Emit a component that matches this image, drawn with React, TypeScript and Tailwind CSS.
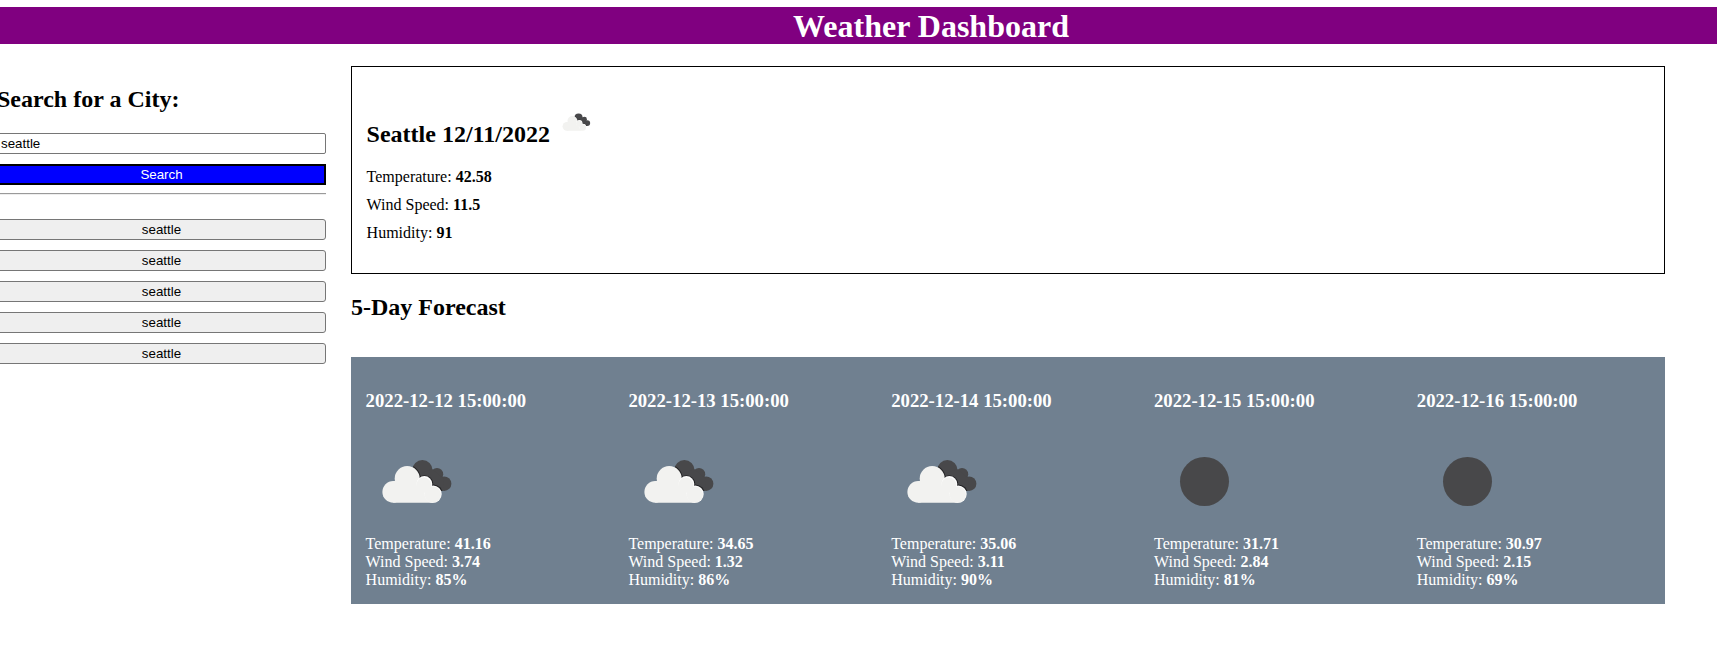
type Sky = 'clouds' | 'clear';

interface Day {
  date: string;
  sky: Sky;
  temp: string;
  wind: string;
  humidity: string;
}

const days: Day[] = [
  { date: '2022-12-12 15:00:00', sky: 'clouds', temp: '41.16', wind: '3.74', humidity: '85%' },
  { date: '2022-12-13 15:00:00', sky: 'clouds', temp: '34.65', wind: '1.32', humidity: '86%' },
  { date: '2022-12-14 15:00:00', sky: 'clouds', temp: '35.06', wind: '3.11', humidity: '90%' },
  { date: '2022-12-15 15:00:00', sky: 'clear', temp: '31.71', wind: '2.84', humidity: '81%' },
  { date: '2022-12-16 15:00:00', sky: 'clear', temp: '30.97', wind: '2.15', humidity: '69%' },
];

const history = ['seattle', 'seattle', 'seattle', 'seattle', 'seattle'];

function BackCloud() {
  return (
    <>
      <circle cx="56.4" cy="39.1" r="10.1" />
      <circle cx="71" cy="43.2" r="6.2" />
      <circle cx="78.1" cy="52.7" r="7.3" />
      <path d="M56 42L66 38L78 48L77 60H70L56 50z" />
    </>
  );
}

function WeatherIcon({ sky, className }: { sky: Sky; className: string }) {
  return (
    <svg viewBox="0 0 100 100" className={className} aria-hidden="true">
      {sky === 'clear' ? (
        <circle cx="50.5" cy="50.5" r="24.5" fill="#48484a" />
      ) : (
        <>
          <clipPath id="back-cloud">
            <circle cx="56.4" cy="39.1" r="10.1" />
            <circle cx="71" cy="43.2" r="6.2" />
            <circle cx="78.1" cy="52.7" r="7.3" />
            <path d="M56 42L66 38L78 48L77 60H70L56 50z" />
          </clipPath>
          <g fill="#48484a">
            <BackCloud />
          </g>
          <g fill="#222224" clipPath="url(#back-cloud)">
            <circle cx="41.2" cy="47.5" r="13.5" />
            <circle cx="58.4" cy="53" r="8.8" />
            <circle cx="67.1" cy="63.2" r="9.7" />
          </g>
          <g fill="#f2f2f0">
            <circle cx="27.2" cy="60.9" r="10.8" />
            <circle cx="41.2" cy="47.5" r="12.5" />
            <path d="M27.2 50.1H30L42 48L58 53L67.1 63V71.7H27.2z" />
          </g>
          <g fill="#ffffff">
            <circle cx="58.4" cy="53" r="7.9" />
            <circle cx="67.1" cy="63.1" r="8.6" />
          </g>
          <g fill="#f2f2f0">
            <circle cx="57.9" cy="54" r="7.6" />
            <circle cx="66.8" cy="63.6" r="8.2" />
          </g>
        </>
      )}
    </svg>
  );
}

export default function App() {
  return (
    <div className="h-[658px] w-full overflow-hidden bg-white pt-[7px] font-['Liberation_Serif','Times_New_Roman',serif] text-base leading-[18px] text-black">
      <header className="h-[37px] bg-[#800080] pl-[145px] text-center">
        <h1 className="text-[32px] leading-[38px] font-bold text-white">Weather Dashboard</h1>
      </header>

      <div className="flex items-start">
        <aside className="-ml-[3px] flex w-[329px] shrink-0 flex-col pt-[42px] font-['Liberation_Sans',Arial,sans-serif] text-[13.333px] leading-[15px]">
          <h2 className="mb-5 font-['Liberation_Serif','Times_New_Roman',serif] text-2xl leading-[27px] font-bold">
            Search for a City:
          </h2>
          <input
            type="text"
            defaultValue="seattle"
            aria-label="City"
            className="mb-2.5 h-[21px] rounded-[2px] border border-[#767676] bg-white px-[3px]"
          />
          <button className="h-[21px] border-2 border-black bg-[#0000ff] text-white">Search</button>
          <hr className="mt-2 mb-6 h-0.5 border-t border-b border-t-[#9a9a9a] border-b-[#eeeeee]" />
          <div className="flex flex-col gap-2.5">
            {history.map((city, i) => (
              <button key={i} className="h-[21px] rounded-[3px] border border-[#767676] bg-[#efefef]">
                {city}
              </button>
            ))}
          </div>
        </aside>

        <main className="ml-[25px] w-[1314px] shrink-0 pt-[22px]">
          <section className="h-[208px] border border-black pt-[35px] pl-[14.6px]">
            <h2 className="flex h-[66px] items-start text-2xl font-bold">
              <span className="mt-[19px] leading-[27px]">Seattle 12/11/2022</span>
              <WeatherIcon sky="clouds" className="ml-[6px] size-10" />
            </h2>
            <div className="flex flex-col gap-2.5">
              <p>
                Temperature: <b>42.58</b>
              </p>
              <p>
                Wind Speed: <b>11.5</b>
              </p>
              <p>
                Humidity: <b>91</b>
              </p>
            </div>
          </section>

          <h2 className="mt-5 mb-9 text-2xl leading-[27px] font-bold">5-Day Forecast</h2>

          <section className="grid h-[247px] grid-cols-5 bg-[#708090] text-white">
            {days.map((day) => (
              <article key={day.date} className="pt-[33px] pl-[14.6px]">
                <h3 className="text-[18.72px] leading-[22px] font-bold">{day.date}</h3>
                <WeatherIcon sky={day.sky} className="mt-[19px] mb-[4px] block size-[100px]" />
                <p>
                  Temperature: <b>{day.temp}</b>
                </p>
                <p>
                  Wind Speed: <b>{day.wind}</b>
                </p>
                <p>
                  Humidity: <b>{day.humidity}</b>
                </p>
              </article>
            ))}
          </section>
        </main>
      </div>
    </div>
  );
}
